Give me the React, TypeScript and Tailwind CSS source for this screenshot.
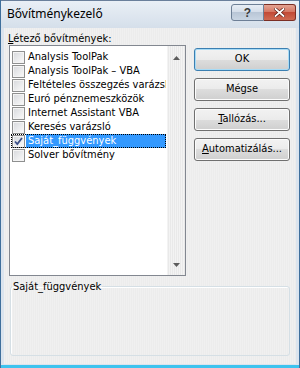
import React from "react";

const items = [
  "Analysis ToolPak",
  "Analysis ToolPak – VBA",
  "Feltételes összegzés varázsló",
  "Euró pénznemeszközök",
  "Internet Assistant VBA",
  "Keresés varázsló",
  "Saját_függvények",
  "Solver bővítmény",
];

function Check({ checked }: { checked?: boolean }) {
  return (
    <span className="w-[13px] h-[13px] shrink-0 border border-[#8e8f8f] bg-[linear-gradient(135deg,#d6d8dc,#fbfbfb)] shadow-[inset_0_0_0_1px_#f4f4f4] flex items-center justify-center">
      {checked && (
        <svg width="11" height="11" viewBox="0 0 11 11">
          <path d="M2 5.5 L4.3 8 L9 2" fill="none" stroke="#3b4f86" strokeWidth="1.8" />
        </svg>
      )}
    </span>
  );
}

function Arrow({ down }: { down?: boolean }) {
  return (
    <svg width="7" height="4" viewBox="0 0 7 4">
      <path d={down ? "M0 0 H7 L3.5 4 Z" : "M0 4 H7 L3.5 0 Z"} fill="#5c5c5c" />
    </svg>
  );
}

function Btn({ children, def }: { children: React.ReactNode; def?: boolean }) {
  return (
    <button
      className={`w-[96px] h-[23px] rounded-[3px] border text-[11px] text-black bg-[linear-gradient(#f2f2f2_0%,#ebebeb_50%,#dddddd_50%,#cfcfcf_100%)] ${
        def ? "border-[#3c7fb1] shadow-[inset_0_0_0_1px_#a7dbf6]" : "border-[#707070] shadow-[inset_0_0_0_1px_#fcfcfc]"
      }`}
    >
      {children}
    </button>
  );
}

export default function App() {
  return (
    <div className="w-[300px] h-[368px] flex flex-col bg-[#dbe4ee] border-l border-r border-[#3f6f9c] font-['DejaVu_Sans_Condensed','DejaVu_Sans',sans-serif] [font-stretch:condensed] text-[11px] text-black select-none">
      {/* title bar */}
      <div className="h-[28px] shrink-0 flex items-center pl-[6px] pr-[3px] bg-[linear-gradient(#e9eff6,#d5dfea)] border-t border-[#6a7f9b]">
        <span className="flex-1 font-['Noto_Sans',sans-serif] [font-stretch:normal] text-[12px] leading-none pb-[1px]">Bővítménykezelő</span>
        <div className="flex self-start mt-[3px]">
          <div className="w-[33px] h-[17px] rounded-l-[3px] border border-[#6d7f96] bg-[linear-gradient(#e6edf5_0%,#d3dce8_50%,#b9c6d6_50%,#c9d5e3_100%)] flex items-center justify-center text-[12px] font-bold text-[#3a3a3a] font-['Liberation_Sans',sans-serif] leading-none">
            ?
          </div>
          <div className="w-[32px] h-[17px] rounded-r-[3px] border border-l-0 border-[#7a2e24] bg-[linear-gradient(#e3a393_0%,#d4735f_50%,#c24a36_50%,#cf6a52_100%)] flex items-center justify-center">
            <svg width="11" height="9" viewBox="0 0 11 9">
              <path d="M1.5 1 L9.5 8 M9.5 1 L1.5 8" stroke="#5a1a12" strokeWidth="3.2" strokeLinecap="square" />
              <path d="M1.5 1 L9.5 8 M9.5 1 L1.5 8" stroke="#ffffff" strokeWidth="1.8" strokeLinecap="square" />
            </svg>
          </div>
        </div>
      </div>

      {/* client area */}
      <div className="flex-1 mx-[3px] bg-[repeating-linear-gradient(90deg,#f0f0f0_0_1px,#ececec_1px_2px)] pt-[4px] px-[4px] flex flex-col">
        <div className="flex">
          <div className="flex flex-col">
            <div className="h-[13px] leading-[13px] whitespace-nowrap">
              <span className="underline">L</span>étező bővítmények:
            </div>
            <div className="ml-[1px] w-[177px] h-[231px] border border-[#828790] bg-white flex">
              <div className="flex-1 pt-[4px] flex flex-col overflow-hidden">
                {items.map((it, i) => {
                  const sel = i === 6;
                  return (
                    <div
                      key={it}
                      className={`h-[14px] ml-[1px] w-[155px] flex items-center ${
                        sel ? "outline outline-1 outline-dotted outline-black -outline-offset-1" : ""
                      }`}
                    >
                      <span className="ml-[1px]">
                        <Check checked={sel} />
                      </span>
                      <span
                        className={`ml-[1px] h-[14px] flex-1 pl-[2px] leading-[14px] whitespace-nowrap overflow-hidden ${
                          sel ? "bg-[#3399ff] text-white" : ""
                        }`}
                      >
                        {it}
                      </span>
                    </div>
                  );
                })}
              </div>
              <div className="w-[18px] bg-[repeating-linear-gradient(90deg,#f3f3f3_0_1px,#e9e9e9_1px_2px)] flex flex-col items-center justify-between pt-[10px] pb-[8px]">
                <Arrow />
                <Arrow down />
              </div>
            </div>
          </div>
          <div className="ml-[8px] pt-[16px] flex flex-col gap-[7px]">
            <Btn def>OK</Btn>
            <Btn>Mégse</Btn>
            <Btn>
              <span className="underline">T</span>allózás...
            </Btn>
            <Btn>
              <span className="underline">A</span>utomatizálás...
            </Btn>
          </div>
        </div>
        <fieldset className="mt-[4px] ml-[2px] w-[280px] h-[76px] border border-[#d5dfe5] rounded-[3px] shadow-[inset_1px_1px_0_#ffffff] pl-[1px]">
          <legend className="px-[1px] leading-[13px]">Saját_függvények</legend>
        </fieldset>
      </div>
      <div className="h-[4px] shrink-0 border-b-[3px] border-[#3dc3ee] mx-0"></div>
    </div>
  );
}
